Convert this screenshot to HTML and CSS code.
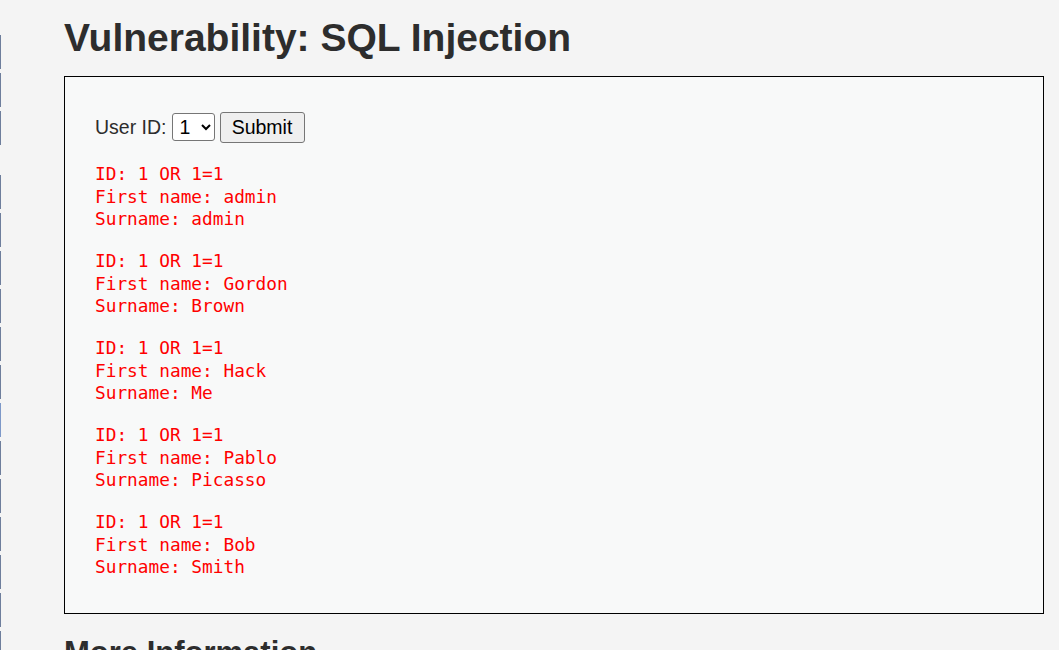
FILE: index.html
```html
<!DOCTYPE html>
<html lang="en">
<head>
    <meta charset="UTF-8">
    <meta name="viewport" content="width=device-width, initial-scale=1.0">
    <title>Vulnerability: SQL Injection</title>
    <link rel="stylesheet" href="styles.css">
</head>
<body>
    <div class="page">
        <nav class="menu">
            <div class="menu-group">
                <a class="menu-item" href="#"></a>
                <a class="menu-item" href="#"></a>
                <a class="menu-item" href="#"></a>
            </div>
            <div class="menu-group">
                <a class="menu-item" href="#"></a>
                <a class="menu-item" href="#"></a>
                <a class="menu-item" href="#"></a>
                <a class="menu-item" href="#"></a>
                <a class="menu-item" href="#"></a>
                <a class="menu-item" href="#"></a>
                <a class="menu-item selected" href="#"></a>
                <a class="menu-item" href="#"></a>
                <a class="menu-item" href="#"></a>
                <a class="menu-item" href="#"></a>
                <a class="menu-item" href="#"></a>
                <a class="menu-item" href="#"></a>
                <a class="menu-item" href="#"></a>
            </div>
        </nav>

        <div class="body-padded">
            <h1>Vulnerability: SQL Injection</h1>

            <div class="vulnerable-code-area">
                <form class="user-form" action="#" method="GET">
                    <label for="userId">User ID:</label>
                    <select id="userId" name="id">
                        <option value="1">1</option>
                        <option value="2">2</option>
                        <option value="3">3</option>
                        <option value="4">4</option>
                        <option value="5">5</option>
                    </select>
                    <button type="submit" name="Submit">Submit</button>
                </form>
                <pre>ID: 1 OR 1=1<br />First name: admin<br />Surname: admin</pre>
                <pre>ID: 1 OR 1=1<br />First name: Gordon<br />Surname: Brown</pre>
                <pre>ID: 1 OR 1=1<br />First name: Hack<br />Surname: Me</pre>
                <pre>ID: 1 OR 1=1<br />First name: Pablo<br />Surname: Picasso</pre>
                <pre>ID: 1 OR 1=1<br />First name: Bob<br />Surname: Smith</pre>
            </div>

            <h2>More Information</h2>
        </div>
    </div>
</body>
</html>
```

FILE: styles.css
```css
body {
    margin: 0;
    background: #f4f4f4;
    color: #2d2d2d;
    font-family: "Liberation Sans", Arial, sans-serif;
    font-size: 19.5px;
    overflow: hidden;
}
.page {
    display: flex;
    align-items: flex-start;
}
.menu {
    width: 1px;
    padding-top: 35px;
    flex-shrink: 0;
}
.menu-group {
    display: flex;
    flex-direction: column;
    gap: 4px;
    margin-bottom: 30px;
}
.menu-item {
    display: block;
    height: 34px;
    background: #6e7e9c;
}
.menu-item.selected {
    background: #7d98c8;
}
.body-padded {
    flex: 1;
    margin-left: 63px;
    margin-right: 15px;
    padding-top: 14px;
}
h1 {
    margin: 0 0 15px;
    font-size: 39px;
    line-height: 47px;
    font-weight: bold;
}
.vulnerable-code-area {
    background: #f8f9f9;
    border: 1px solid #000;
    padding: 35px 30px 34px;
}
.user-form {
    display: flex;
    align-items: baseline;
    margin-bottom: 20px;
}
label {
    margin-right: 5px;
}
select {
    font-family: "Liberation Sans", Arial, sans-serif;
    font-size: 19.5px;
    height: 28px;
    width: 43px;
    padding: 0 0 0 3px;
    margin-right: 5px;
    color: #000;
    background: #fff;
    border: 1px solid #767676;
    border-radius: 3px;
}
button {
    font-family: "Liberation Sans", Arial, sans-serif;
    font-size: 19.5px;
    height: 31px;
    width: 85px;
    padding: 0;
    color: #000;
    background: #efefef;
    border: 1px solid #767676;
    border-radius: 3px;
}
pre {
    margin: 0 0 19.5px;
    color: #f00;
    font-family: "DejaVu Sans Mono", "Liberation Mono", monospace;
    font-size: 17.8px;
    line-height: 22.5px;
}
pre:last-child {
    margin-bottom: 0;
}
h2 {
    margin: 21px 0 0;
    font-size: 31px;
    line-height: 35px;
}
```
